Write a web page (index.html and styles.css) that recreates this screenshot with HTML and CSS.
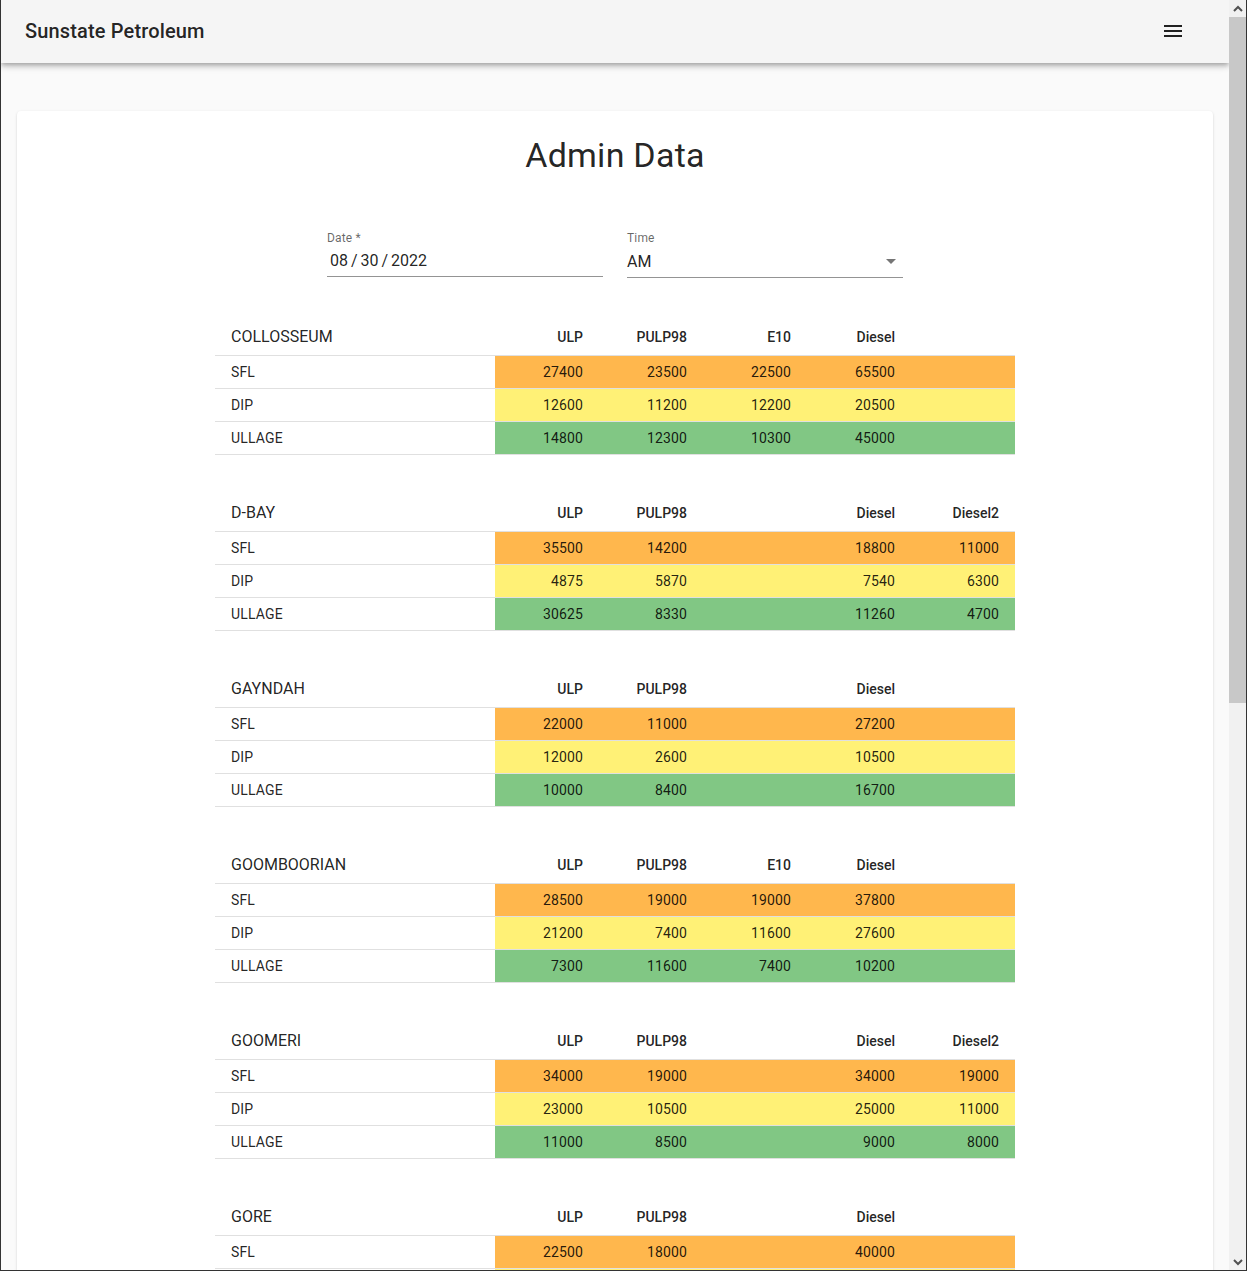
FILE: index.html
```html
<!DOCTYPE html>
<html lang="en">
<head>
<meta charset="utf-8">
<title>Sunstate Petroleum - Admin Data</title>
<link rel="stylesheet" href="styles.css">
</head>
<body>
<div class="frame">
  <div class="viewport">
    <header class="appbar">
      <div class="brand">Sunstate Petroleum</div>
      <button class="menu-btn" aria-label="menu">
        <svg viewBox="0 0 24 24" width="24" height="24"><path d="M3 18h18v-2H3v2zm0-5h18v-2H3v2zm0-7v2h18V6H3z" fill="#212121"/></svg>
      </button>
    </header>
    <main class="main">
      <section class="card">
        <h1 class="title">Admin Data</h1>
        <div class="fields">
          <div class="field">
            <label class="field-label">Date *</label>
            <div class="field-input date-input">08 / 30 / 2022</div>
          </div>
          <div class="field">
            <label class="field-label">Time</label>
            <div class="field-input">AM
              <svg class="drop" viewBox="0 0 24 24" width="24" height="24"><path d="M7 10l5 5 5-5z" fill="rgba(0,0,0,0.54)"/></svg>
            </div>
          </div>
        </div>

        <div class="tables">
          <table class="site">
            <colgroup><col class="c-name"><col class="c-num"><col class="c-num"><col class="c-num"><col class="c-num"><col class="c-num"></colgroup>
            <thead><tr><th class="site-name">COLLOSSEUM</th><th>ULP</th><th>PULP98</th><th>E10</th><th>Diesel</th><th></th></tr></thead>
            <tbody>
              <tr class="sfl"><td>SFL</td><td>27400</td><td>23500</td><td>22500</td><td>65500</td><td></td></tr>
              <tr class="dip"><td>DIP</td><td>12600</td><td>11200</td><td>12200</td><td>20500</td><td></td></tr>
              <tr class="ullage"><td>ULLAGE</td><td>14800</td><td>12300</td><td>10300</td><td>45000</td><td></td></tr>
            </tbody>
          </table>

          <table class="site">
            <colgroup><col class="c-name"><col class="c-num"><col class="c-num"><col class="c-num"><col class="c-num"><col class="c-num"></colgroup>
            <thead><tr><th class="site-name">D-BAY</th><th>ULP</th><th>PULP98</th><th></th><th>Diesel</th><th>Diesel2</th></tr></thead>
            <tbody>
              <tr class="sfl"><td>SFL</td><td>35500</td><td>14200</td><td></td><td>18800</td><td>11000</td></tr>
              <tr class="dip"><td>DIP</td><td>4875</td><td>5870</td><td></td><td>7540</td><td>6300</td></tr>
              <tr class="ullage"><td>ULLAGE</td><td>30625</td><td>8330</td><td></td><td>11260</td><td>4700</td></tr>
            </tbody>
          </table>

          <table class="site">
            <colgroup><col class="c-name"><col class="c-num"><col class="c-num"><col class="c-num"><col class="c-num"><col class="c-num"></colgroup>
            <thead><tr><th class="site-name">GAYNDAH</th><th>ULP</th><th>PULP98</th><th></th><th>Diesel</th><th></th></tr></thead>
            <tbody>
              <tr class="sfl"><td>SFL</td><td>22000</td><td>11000</td><td></td><td>27200</td><td></td></tr>
              <tr class="dip"><td>DIP</td><td>12000</td><td>2600</td><td></td><td>10500</td><td></td></tr>
              <tr class="ullage"><td>ULLAGE</td><td>10000</td><td>8400</td><td></td><td>16700</td><td></td></tr>
            </tbody>
          </table>

          <table class="site">
            <colgroup><col class="c-name"><col class="c-num"><col class="c-num"><col class="c-num"><col class="c-num"><col class="c-num"></colgroup>
            <thead><tr><th class="site-name">GOOMBOORIAN</th><th>ULP</th><th>PULP98</th><th>E10</th><th>Diesel</th><th></th></tr></thead>
            <tbody>
              <tr class="sfl"><td>SFL</td><td>28500</td><td>19000</td><td>19000</td><td>37800</td><td></td></tr>
              <tr class="dip"><td>DIP</td><td>21200</td><td>7400</td><td>11600</td><td>27600</td><td></td></tr>
              <tr class="ullage"><td>ULLAGE</td><td>7300</td><td>11600</td><td>7400</td><td>10200</td><td></td></tr>
            </tbody>
          </table>

          <table class="site">
            <colgroup><col class="c-name"><col class="c-num"><col class="c-num"><col class="c-num"><col class="c-num"><col class="c-num"></colgroup>
            <thead><tr><th class="site-name">GOOMERI</th><th>ULP</th><th>PULP98</th><th></th><th>Diesel</th><th>Diesel2</th></tr></thead>
            <tbody>
              <tr class="sfl"><td>SFL</td><td>34000</td><td>19000</td><td></td><td>34000</td><td>19000</td></tr>
              <tr class="dip"><td>DIP</td><td>23000</td><td>10500</td><td></td><td>25000</td><td>11000</td></tr>
              <tr class="ullage"><td>ULLAGE</td><td>11000</td><td>8500</td><td></td><td>9000</td><td>8000</td></tr>
            </tbody>
          </table>

          <table class="site">
            <colgroup><col class="c-name"><col class="c-num"><col class="c-num"><col class="c-num"><col class="c-num"><col class="c-num"></colgroup>
            <thead><tr><th class="site-name">GORE</th><th>ULP</th><th>PULP98</th><th></th><th>Diesel</th><th></th></tr></thead>
            <tbody>
              <tr class="sfl"><td>SFL</td><td>22500</td><td>18000</td><td></td><td>40000</td><td></td></tr>
              <tr class="dip"><td>DIP</td><td>10400</td><td>7300</td><td></td><td>22700</td><td></td></tr>
              <tr class="ullage"><td>ULLAGE</td><td>12100</td><td>10700</td><td></td><td>17300</td><td></td></tr>
            </tbody>
          </table>
        </div>
      </section>
    </main>
  </div>
  <div class="scrollbar" aria-hidden="true">
    <div class="sb-btn">
      <svg viewBox="0 0 16 16" width="16" height="16"><path d="M4 10 L8 6 L12 10" fill="none" stroke="#505050" stroke-width="2"/></svg>
    </div>
    <div class="sb-track"><div class="sb-thumb"></div></div>
    <div class="sb-btn">
      <svg viewBox="0 0 16 16" width="16" height="16"><path d="M4 6 L8 10 L12 6" fill="none" stroke="#505050" stroke-width="2"/></svg>
    </div>
  </div>
</div>
</body>
</html>
```
FILE: styles.css
```css
* { box-sizing: border-box; }

html, body {
  margin: 0;
  padding: 0;
  height: 100%;
  overflow: hidden;
}

body {
  font-family: Roboto, "Liberation Sans", Arial, sans-serif;
  color: rgba(0, 0, 0, 0.87);
  background: #fafafa;
}

.frame {
  display: flex;
  height: 1271px;
  border-left: 1px solid #333;
  border-right: 1px solid #333;
  border-bottom: 1px solid #333;
}

.viewport {
  flex: 1;
  min-width: 0;
  display: flex;
  flex-direction: column;
  overflow: hidden;
  background: #fafafa;
}

.appbar {
  flex: none;
  height: 63px;
  display: flex;
  align-items: center;
  justify-content: space-between;
  padding: 0 44px 2px 24px;
  background: #f5f5f5;
  box-shadow: 0px 2px 4px -1px rgba(0,0,0,0.2), 0px 4px 5px 0px rgba(0,0,0,0.14), 0px 1px 10px 0px rgba(0,0,0,0.12);
  position: relative;
  z-index: 2;
}

.brand {
  font-size: 20px;
  font-weight: 500;
  letter-spacing: 0.15px;
  color: rgba(0, 0, 0, 0.87);
}

.menu-btn {
  border: 0;
  background: none;
  padding: 0;
  width: 24px;
  height: 24px;
  display: flex;
}

.main {
  flex: 1;
  padding: 48px 16px 0;
}

.card {
  background: #fff;
  border-radius: 4px;
  box-shadow: 0px 2px 1px -1px rgba(0,0,0,0.2), 0px 1px 1px 0px rgba(0,0,0,0.14), 0px 1px 3px 0px rgba(0,0,0,0.12);
  padding: 23px 0 40px;
  min-height: 1400px;
}

.title {
  margin: 0;
  text-align: center;
  font-size: 34px;
  font-weight: 400;
  line-height: 42px;
  letter-spacing: 0.25px;
}

.fields {
  display: flex;
  justify-content: center;
  gap: 24px;
  margin-top: 52px;
}

.field {
  width: 276px;
  height: 48px;
  display: flex;
  flex-direction: column;
}

.field-label {
  font-size: 12px;
  line-height: 16px;
  color: rgba(0, 0, 0, 0.6);
  letter-spacing: 0.15px;
  height: 16px;
  padding-top: 2px;
}

.field-input {
  flex: 1;
  display: flex;
  align-items: center;
  justify-content: space-between;
  padding: 5px 0 4px 0;
  font-size: 16px;
  line-height: 23px;
  border-bottom: 1px solid rgba(0, 0, 0, 0.42);
  letter-spacing: 0.15px;
}

.date-input {
  padding-left: 3px;
  letter-spacing: 0;
  word-spacing: -1px;
}

.drop { display: block; }

.tables {
  margin-top: 43px;
  display: flex;
  flex-direction: column;
  align-items: center;
  gap: 40px;
}

.site {
  width: 800px;
  border-collapse: collapse;
  table-layout: fixed;
}

.c-name { width: 280px; }
.c-num { width: 104px; }

.site th,
.site td {
  padding: 6px 16px;
  border-bottom: 1px solid #e0e0e0;
  text-align: right;
}

.site th {
  font-size: 14px;
  font-weight: 500;
  line-height: 24px;
}

.site th.site-name {
  text-align: left;
  font-size: 16px;
  font-weight: 400;
}

.site td {
  font-size: 14px;
  line-height: 20px;
  letter-spacing: 0.15px;
}

.site td:first-child {
  text-align: left;
  background: #fff;
}

.sfl td { background: #ffb74d; }
.dip td { background: #fff176; }
.ullage td { background: #81c784; }

.scrollbar {
  width: 17px;
  flex: none;
  display: flex;
  flex-direction: column;
  background: #f1f1f1;
}

.sb-btn {
  height: 17px;
  flex: none;
  display: flex;
  align-items: center;
  justify-content: center;
}

.sb-track {
  flex: 1;
  display: flex;
  flex-direction: column;
}

.sb-thumb {
  height: 686px;
  background: #c8c8c8;
}
```
